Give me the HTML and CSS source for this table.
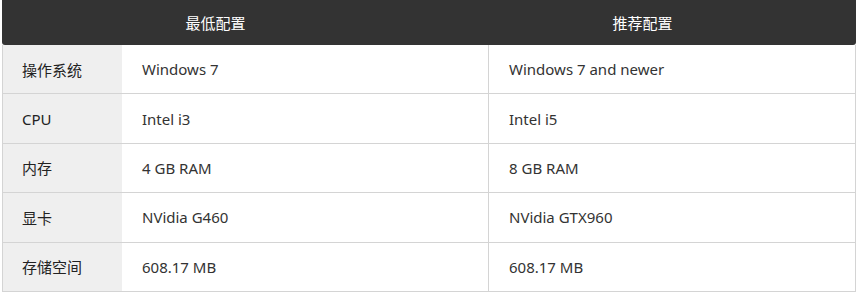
FILE: index.html
```html
<!DOCTYPE html>
<html lang="zh-CN">
<head>
<meta charset="utf-8">
<link rel="stylesheet" href="styles.css">
</head>
<body>
<div class="spec">
  <div class="spec-head">
    <div class="head-cell">最低配置</div>
    <div class="head-cell">推荐配置</div>
  </div>
  <div class="spec-body">
    <div class="row"><div class="label">操作系统</div><div class="val">Windows 7</div><div class="val val-rec">Windows 7 and newer</div></div>
    <div class="row"><div class="label">CPU</div><div class="val">Intel i3</div><div class="val val-rec">Intel i5</div></div>
    <div class="row"><div class="label">内存</div><div class="val">4 GB RAM</div><div class="val val-rec">8 GB RAM</div></div>
    <div class="row"><div class="label">显卡</div><div class="val">NVidia G460</div><div class="val val-rec">NVidia GTX960</div></div>
    <div class="row"><div class="label">存储空间</div><div class="val">608.17 MB</div><div class="val val-rec">608.17 MB</div></div>
  </div>
</div>
</body>
</html>
```
FILE: styles.css
```css
* { box-sizing: border-box; }
html, body { margin: 0; padding: 0; background: #fff; }
body {
  font-family: "Noto Sans", "Noto Sans CJK SC", sans-serif;
  font-size: 15px;
  color: #333;
}
.spec {
  width: 854px;
  margin-left: 2px;
}
.spec-head {
  display: grid;
  grid-template-columns: 1fr 1fr;
  height: 45px;
  background: #333;
  color: #fff;
  border-radius: 0 0 3px 3px;
}
.head-cell {
  display: flex;
  align-items: center;
  justify-content: center;
  padding-bottom: 1px;
}
.spec-body {
  border-left: 1px solid #d4d4d4;
  border-right: 1px solid #d4d4d4;
}
.row {
  display: grid;
  grid-template-columns: 119px 366px 1fr;
  height: 49.4px;
  border-bottom: 1px solid #d4d4d4;
}
.label, .val {
  display: flex;
  align-items: center;
  padding-left: 19px;
}
.label { background: #efefef; color: #222; }
.val { padding-left: 20px; }
.val-rec { border-left: 1px solid #d4d4d4; padding-left: 20px; }
```
